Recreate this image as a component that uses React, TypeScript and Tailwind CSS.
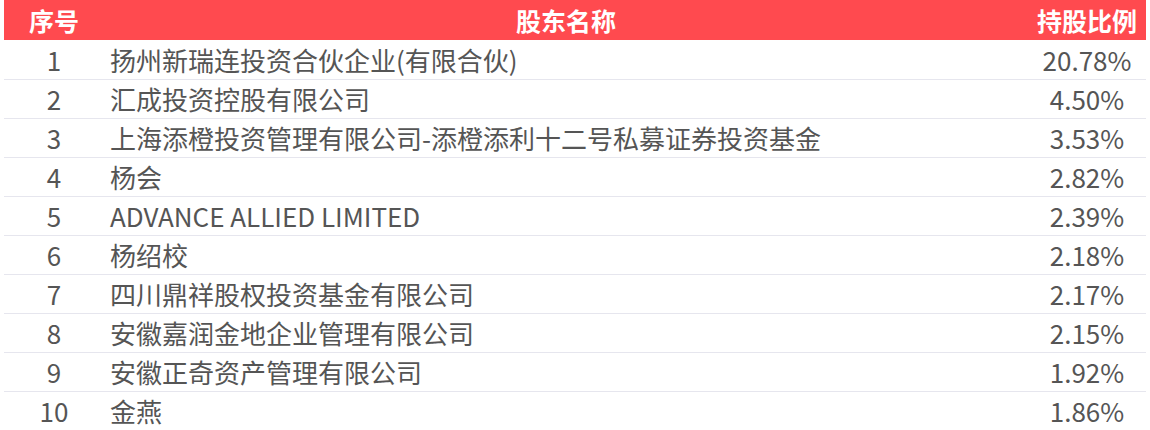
import React from "react";

const rows: [string, string, string][] = [
  ["1", "扬州新瑞连投资合伙企业(有限合伙)", "20.78%"],
  ["2", "汇成投资控股有限公司", "4.50%"],
  ["3", "上海添橙投资管理有限公司-添橙添利十二号私募证券投资基金", "3.53%"],
  ["4", "杨会", "2.82%"],
  ["5", "ADVANCE ALLIED LIMITED", "2.39%"],
  ["6", "杨绍校", "2.18%"],
  ["7", "四川鼎祥股权投资基金有限公司", "2.17%"],
  ["8", "安徽嘉润金地企业管理有限公司", "2.15%"],
  ["9", "安徽正奇资产管理有限公司", "1.92%"],
  ["10", "金燕", "1.86%"],
];

export default function App() {
  return (
    <div
      className="w-[1150px] h-[430px] bg-white overflow-hidden px-[4px]"
      style={{ fontFamily: '"Noto Sans CJK SC", "Noto Sans", sans-serif' }}
    >
      <div className="grid grid-cols-[100px_924px_118px] h-[40px] mb-[1px] bg-[#ff4a4f] items-center text-white font-bold text-[25px] leading-none">
        <div className="text-center">序号</div>
        <div className="text-center">股东名称</div>
        <div className="text-center">持股比例</div>
      </div>
      {rows.map(([n, name, pct]) => (
        <div
          key={n}
          className="grid grid-cols-[100px_924px_118px] h-[39px] border-b border-[#e6e6ee] items-center text-[#555555] text-[26px] leading-none"
        >
          <div className="text-center">{n}</div>
          <div className="pl-[6px] whitespace-nowrap">{name}</div>
          <div className="text-center">{pct}</div>
        </div>
      ))}
    </div>
  );
}
